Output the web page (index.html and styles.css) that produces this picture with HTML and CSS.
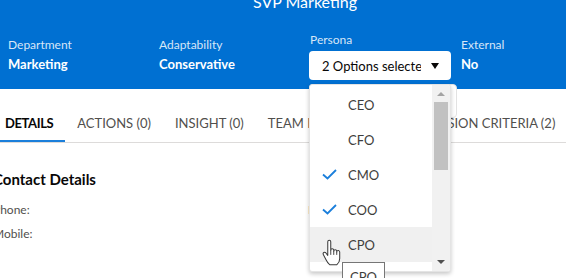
FILE: index.html
```html
<!DOCTYPE html>
<html lang="en">
<head>
    <meta charset="UTF-8">
    <meta name="viewport" content="width=device-width, initial-scale=1.0">
    <title>SVP Marketing</title>
    <link rel="stylesheet" href="styles.css">
</head>
<body>

<header class="hero">
    <h1 class="hero-title">SVP Marketing</h1>
    <div class="hero-fields">
        <div class="field">
            <div class="field-label">Department</div>
            <div class="field-value">Marketing</div>
        </div>
        <div class="field">
            <div class="field-label">Adaptability</div>
            <div class="field-value">Conservative</div>
        </div>
        <div class="field field-select">
            <div class="field-label">Persona</div>
            <div class="combo-wrap">
                <div class="combo">
                    <span class="combo-text">2 Options selected</span>
                    <span class="combo-arrow"></span>
                </div>
                <div class="dropdown-back"></div>
                <div class="dropdown">
                    <ul class="options">
                        <li class="option"><span class="check"></span>CEO</li>
                        <li class="option"><span class="check"></span>CFO</li>
                        <li class="option"><span class="check">
                            <svg viewBox="0 0 15 11" width="15" height="11"><path d="M1 5.5 L5.5 9.5 L14 1" fill="none" stroke="#1b7fdb" stroke-width="1.8"/></svg>
                        </span>CMO</li>
                        <li class="option"><span class="check">
                            <svg viewBox="0 0 15 11" width="15" height="11"><path d="M1 5.5 L5.5 9.5 L14 1" fill="none" stroke="#1b7fdb" stroke-width="1.8"/></svg>
                        </span>COO</li>
                        <li class="option option-hover"><span class="check"></span>CPO</li>
                        <li class="option"><span class="check"></span>CRO</li>
                    </ul>
                    <div class="scrollbar">
                        <span class="sb-up"></span>
                        <span class="sb-thumb"></span>
                        <span class="sb-down"></span>
                    </div>
                </div>
                <!-- mouse pointer over the list -->
                <svg class="cursor" viewBox="0 0 20 30" width="19" height="28">
                    <path d="M6 3 a1.6 1.6 0 0 1 3.2 0 V12 a1.6 1.6 0 0 1 3.2 0 v1 a1.6 1.6 0 0 1 3.2 0 v1 a1.6 1.6 0 0 1 3.2 0 V21 q0 4 -3 6.5 H8 q-2 -1.5 -4 -5.5 L1.2 16.5 a1.6 1.6 0 0 1 2.6 -1.8 L6 17.5 Z" fill="#fff" stroke="#3a3a3a" stroke-width="1.1" stroke-linejoin="round"/>
                    <path d="M9.2 12 v5 M12.4 13 v4 M15.6 14 v3" stroke="#3a3a3a" stroke-width="1"/>
                </svg>
                <div class="tooltip">CPO</div>
            </div>
        </div>
        <div class="field">
            <div class="field-label">External</div>
            <div class="field-value">No</div>
        </div>
    </div>
</header>

<nav class="tabs">
    <a class="tab tab-active">DETAILS</a>
    <a class="tab">ACTIONS (0)</a>
    <a class="tab">INSIGHT (0)</a>
    <a class="tab">TEAM RELATIONS (0)</a>
    <a class="tab">DECISION CRITERIA (2)</a>
</nav>

<section class="section">
    <h2 class="section-title">Contact Details</h2>
    <div class="details">
        <div class="detail-label">Phone:</div>
        <div class="detail-label">Email:</div>
        <div class="detail-label">Mobile:</div>
        <div class="detail-label"></div>
    </div>
</section>

</body>
</html>
```

FILE: styles.css
```css
html,
body {
    height: 100%;
}
body {
    margin: 0;
    font-family: Lato, "Noto Sans", sans-serif;
    background: #fff;
    overflow: hidden;
}
.hero {
    display: flex;
    flex-direction: column;
    height: 89px;
    background: #0070d2;
    color: #fff;
}
.hero-title {
    margin: -10px 0 0;
    padding-left: 44px;
    text-align: center;
    font-size: 16px;
    font-weight: 400;
    line-height: 24px;
}
.hero-fields {
    display: flex;
    padding: 23px 0 0 8px;
}
.field {
    width: 151px;
    flex: none;
}
.field-label {
    font-size: 12px;
    line-height: 16px;
    color: rgba(255, 255, 255, 0.85);
}
.field-value {
    font-size: 13px;
    font-weight: 700;
    line-height: 18px;
    margin-top: 2px;
}
.field-select {
    margin-top: -5px;
}
.combo-wrap {
    position: relative;
    margin: 3px 0 0 -1px;
}
.combo {
    display: flex;
    align-items: center;
    width: 142px;
    height: 29px;
    box-sizing: border-box;
    padding: 0 12px 0 13px;
    background: #fff;
    border-radius: 4px;
    color: #080707;
    font-size: 13px;
}
.combo-text {
    flex: 1;
    overflow: hidden;
    white-space: nowrap;
}
.combo-arrow {
    margin-left: 10px;
    border-left: 4.5px solid transparent;
    border-right: 4.5px solid transparent;
    border-top: 6px solid #080707;
}
.dropdown-back {
    position: absolute;
    top: 33px;
    left: 128px;
    width: 18px;
    height: 32px;
    background: #fff;
    border: 1px solid #e2e2e2;
    border-radius: 4px;
    z-index: 1;
}
.dropdown {
    position: absolute;
    top: 33px;
    left: 0;
    width: 142px;
    height: 188px;
    box-sizing: border-box;
    display: flex;
    background: #fff;
    border: 1px solid #e4e4e4;
    border-radius: 3px;
    box-shadow: 0 2px 4px rgba(0, 0, 0, 0.22);
    overflow: hidden;
    z-index: 2;
}
.options {
    flex: 1;
    margin: 0;
    padding: 2px 0 0;
    list-style: none;
}
.option {
    display: flex;
    align-items: center;
    height: 35px;
    padding-left: 12px;
    font-size: 13px;
    color: #3e3e3c;
}
.option-hover {
    background: #f0f0f0;
}
.check {
    display: flex;
    width: 15px;
    margin-right: 11px;
}
.scrollbar {
    position: relative;
    width: 18px;
    flex: none;
    background: #f1f1f1;
}
.sb-up,
.sb-down {
    position: absolute;
    left: 5px;
    border-left: 4px solid transparent;
    border-right: 4px solid transparent;
}
.sb-up {
    top: 7px;
    border-bottom: 4px solid #a3a3a3;
}
.sb-down {
    top: 175px;
    border-top: 4px solid #505050;
}
.sb-thumb {
    position: absolute;
    top: 17px;
    left: 2px;
    width: 14px;
    height: 68px;
    background: #c1c1c1;
}
.cursor {
    position: absolute;
    top: 188px;
    left: 13px;
    z-index: 3;
}
.tooltip {
    position: absolute;
    top: 211px;
    left: 33px;
    padding: 5px 7px;
    background: #fff;
    border: 1px solid #767676;
    color: #3e3e3c;
    font-size: 13px;
    line-height: 18px;
    z-index: 3;
}
.tabs {
    display: flex;
    height: 39px;
    margin: 14px 0 0 -7px;
    border-bottom: 1px solid #dddbda;
    overflow: hidden;
}
.tab {
    flex: none;
    display: flex;
    align-items: center;
    padding: 0 12px;
    font-size: 13px;
    color: #514f4d;
    white-space: nowrap;
}
.tab-active {
    font-weight: 700;
    letter-spacing: -0.4px;
    color: #080707;
    box-shadow: inset 0 -2px #1b7fdb;
}
.section {
    margin-left: -7px;
}
.section-title {
    margin: 26px 0 0;
    font-size: 15px;
    font-weight: 700;
    line-height: 20px;
    color: #080707;
}
.details {
    display: grid;
    grid-template-columns: 315px 1fr;
    row-gap: 8px;
    margin-top: 13px;
}
.detail-label {
    font-size: 12px;
    line-height: 16px;
    color: #514f4d;
}
```
